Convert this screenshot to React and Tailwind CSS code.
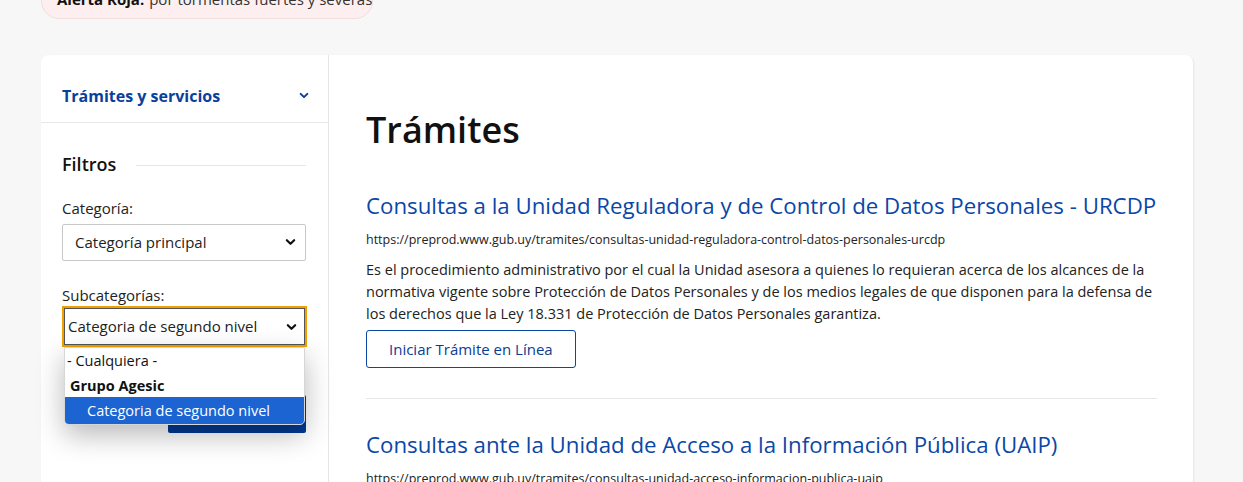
import React from 'react';

const font = { fontFamily: '"Open Sans", "Noto Sans", sans-serif' };

function Chevron({ className = '' }) {
  return (
    <svg viewBox="0 0 12 8" className={className} fill="none" stroke="currentColor" strokeWidth="2.4" strokeLinecap="round" strokeLinejoin="round">
      <path d="M2 2l4 4 4-4" />
    </svg>
  );
}

function SelectBox({ value, focused }) {
  return (
    <div
      className={`flex items-center justify-between bg-white text-[15px] text-[#222] ${
        focused
          ? 'h-[41px] border-2 border-[#f0a000] pl-[4px] pr-[8px] w-[245px] shadow-[inset_0_0_0_1px_#555]'
          : 'h-[37px] border border-[#c8c8c8] rounded-[2px] pl-[12px] pr-[9px] w-[244px]'
      }`}
    >
      <span>{value}</span>
      <Chevron className="w-[11px] h-[8px] text-[#111]" />
    </div>
  );
}

export default function App() {
  return (
    <div className="min-h-[482px] bg-[#f7f7f7] overflow-hidden" style={font}>
      {/* Alerta */}
      <div className="px-[41px]">
        <div className="-mt-[21px] w-[332px] h-[40px] rounded-[18px] bg-[#fdefef] border border-[#f1dede] flex items-center pl-[15px] text-[15px] text-[#333] whitespace-nowrap">
          <b className="text-[#111] mr-[5px]">Alerta Roja:</b> por tormentas fuertes y severas
        </div>
      </div>

      {/* Tarjeta principal */}
      <div className="mx-[41px] mt-[36px] w-[1152px] bg-white rounded-[8px] shadow-[1px_1px_2px_rgba(0,0,0,0.08)] flex min-h-[430px]">
        {/* Sidebar */}
        <aside className="w-[288px] shrink-0 border-r border-[#e6e6e6]">
          <div className="h-[68px] border-b border-[#e8e8e8] flex items-center justify-between pl-[21px] pr-[19px] pt-[14px]">
            <span className="text-[16px] font-bold text-[#0a3f9c]">Trámites y servicios</span>
            <Chevron className="w-[10px] h-[7px] text-[#0a3f9c]" />
          </div>

          <div className="pl-[21px] pr-[22px] pt-[28px]">
            <div className="flex items-center gap-[20px]">
              <span className="text-[18px] text-[#111] font-semibold">Filtros</span>
              <div className="flex-1 h-px bg-[#e6e6e6] mt-[2px]" />
            </div>

            <div className="mt-[19px] text-[15px] text-[#222]">Categoría:</div>
            <div className="mt-[4px]">
              <SelectBox value="Categoría principal" />
            </div>

            <div className="mt-[23px] text-[15px] text-[#222]">Subcategorías:</div>
            <div className="mt-0 relative">
              <SelectBox value="Categoria de segundo nivel" focused />
              <div className="flex justify-end">
                <div className="mt-[48px] w-[138px] h-[38px] bg-[#003a93] rounded-[2px]" />
              </div>

              {/* Lista desplegada */}
              <div className="absolute left-[2px] top-[41px] w-[241px] bg-white rounded-b-[5px] border border-[#d6d6d6] shadow-[0_10px_28px_rgba(0,0,0,0.28)] overflow-hidden text-[14.5px]">
                <div className="h-[26px] flex items-center pl-[2px] text-[#111]">- Cualquiera -</div>
                <div className="h-[23px] flex items-center pl-[5px] font-bold text-[#111]">Grupo Agesic</div>
                <div className="h-[27px] flex items-center pl-[22px] bg-[#1c64d1] text-white">Categoria de segundo nivel</div>
              </div>
            </div>
          </div>
        </aside>

        {/* Contenido */}
        <main className="flex-1 pl-[37px] pr-[36px] pt-[48px]">
          <h1 className="text-[36px] font-semibold text-[#111] leading-[54px]">Trámites</h1>

          <article className="mt-[34px] pb-[30px] border-b border-[#e6e6e6]">
            <h2 className="text-[22.25px] text-[#0b47a6] leading-[30px] whitespace-nowrap">
              Consultas a la Unidad Reguladora y de Control de Datos Personales - URCDP
            </h2>
            <div className="mt-[10px] text-[12.5px] text-[#222] leading-[18px]">
              https://preprod.www.gub.uy/tramites/consultas-unidad-reguladora-control-datos-personales-urcdp
            </div>
            <p className="mt-[10px] text-[14.5px] text-[#222] leading-[22px]">
              Es el procedimiento administrativo por el cual la Unidad asesora a quienes lo requieran acerca de los alcances de la normativa vigente sobre Protección de Datos Personales y de los medios legales de que disponen para la defensa de los derechos que la Ley 18.331 de Protección de Datos Personales garantiza.
            </p>
            <button className="mt-[5px] h-[38px] px-[22px] border border-[#0b47a6] rounded-[3px] text-[15px] text-[#0b3d91] bg-white">
              Iniciar Trámite en Línea
            </button>
          </article>

          <article className="mt-[31px]">
            <h2 className="text-[22.25px] text-[#0b47a6] leading-[30px] whitespace-nowrap">
              Consultas ante la Unidad de Acceso a la Información Pública (UAIP)
            </h2>
            <div className="mt-[10px] text-[12.5px] text-[#222] leading-[18px]">
              https://preprod.www.gub.uy/tramites/consultas-unidad-acceso-informacion-publica-uaip
            </div>
          </article>
        </main>
      </div>
    </div>
  );
}
